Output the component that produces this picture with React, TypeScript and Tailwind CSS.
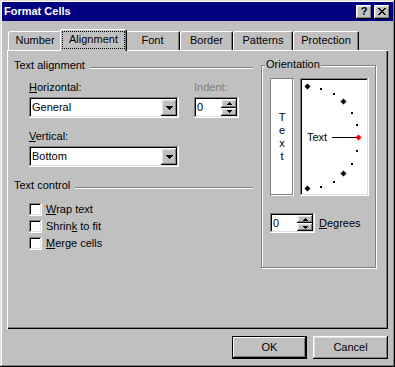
import React from "react";

const raised =
  "shadow-[inset_-1px_-1px_#000,inset_1px_1px_#fff,inset_-2px_-2px_#808080,inset_2px_2px_#dfdfdf]";
const sunken =
  "shadow-[inset_-1px_-1px_#fff,inset_1px_1px_#808080,inset_-2px_-2px_#dfdfdf,inset_2px_2px_#000]";

function DownArrow() {
  return (
    <svg width="7" height="4" shapeRendering="crispEdges">
      <rect x="0" y="0" width="7" height="1" fill="#000" />
      <rect x="1" y="1" width="5" height="1" fill="#000" />
      <rect x="2" y="2" width="3" height="1" fill="#000" />
      <rect x="3" y="3" width="1" height="1" fill="#000" />
    </svg>
  );
}

function SmallArrow({ up }: { up: boolean }) {
  return (
    <svg width="5" height="3" shapeRendering="crispEdges">
      {up ? (
        <>
          <rect x="2" y="0" width="1" height="1" fill="#000" />
          <rect x="1" y="1" width="3" height="1" fill="#000" />
          <rect x="0" y="2" width="5" height="1" fill="#000" />
        </>
      ) : (
        <>
          <rect x="0" y="0" width="5" height="1" fill="#000" />
          <rect x="1" y="1" width="3" height="1" fill="#000" />
          <rect x="2" y="2" width="1" height="1" fill="#000" />
        </>
      )}
    </svg>
  );
}

function CloseGlyph() {
  const rows = ["##....##", ".##..##.", "..####..", "...##...", "..####..", ".##..##.", "##....##"];
  return (
    <svg width="8" height="7" shapeRendering="crispEdges">
      {rows.flatMap((r, y) =>
        r.split("").map((c, x) =>
          c === "#" ? <rect key={`${x}-${y}`} x={x} y={y} width="1" height="1" fill="#000" /> : null
        )
      )}
    </svg>
  );
}

function Select({ value }: { value: string }) {
  return (
    <div className={`flex h-[21px] w-[150px] bg-white p-[2px] ${sunken}`}>
      <div className="flex-1 pl-[1px] leading-[17px]">{value}</div>
      <div className={`flex h-[17px] w-[16px] items-center justify-center bg-[#c0c0c0] ${raised}`}>
        <DownArrow />
      </div>
    </div>
  );
}

function Spinner({ h }: { h: string }) {
  return (
    <div className={`flex w-[45px] bg-white p-[2px] ${h} ${sunken}`}>
      <div className="flex-1 pl-[1px] leading-[16px]">0</div>
      <div className="flex w-[16px] flex-col">
        <div className={`flex flex-1 items-center justify-center bg-[#c0c0c0] ${raised}`}>
          <SmallArrow up />
        </div>
        <div className={`flex flex-1 items-center justify-center bg-[#c0c0c0] ${raised}`}>
          <SmallArrow up={false} />
        </div>
      </div>
    </div>
  );
}

function Heading({ children }: { children: React.ReactNode }) {
  return (
    <div className="flex h-[13px]">
      <span className="whitespace-nowrap">{children}</span>
      <div className="ml-[5px] mt-[8px] h-[2px] flex-1 border-t border-b border-t-[#808080] border-b-white" />
    </div>
  );
}

function Check({ children }: { children: React.ReactNode }) {
  return (
    <div className="flex h-[13px] items-center gap-[4px]">
      <div className={`h-[13px] w-[13px] bg-white ${sunken}`} />
      <span className="whitespace-nowrap">{children}</span>
    </div>
  );
}

function Dial() {
  const cx = 7;
  const cy = 59;
  const r = 51;
  const items: React.ReactNode[] = [];
  for (let a = 90; a >= -90; a -= 15) {
    const rad = (a * Math.PI) / 180;
    const x = Math.round(cx + r * Math.cos(rad));
    const y = Math.round(cy - r * Math.sin(rad));
    if (a % 45 === 0) {
      const fill = a === 0 ? "#ff0000" : "#000";
      items.push(
        <polygon
          key={a}
          points={`${x + 0.5},${y - 2.5} ${x + 3.5},${y + 0.5} ${x + 0.5},${y + 3.5} ${x - 2.5},${y + 0.5}`}
          fill={fill}
        />
      );
    } else {
      items.push(<rect key={a} x={x} y={y} width="2" height="2" fill="#000" />);
    }
  }
  return (
    <svg width="69" height="118" className="block">
      {items}
      <line x1="32" y1="59.5" x2="56" y2="59.5" stroke="#000" strokeWidth="1" />
      <text x="7" y="63" fontSize="11" fontFamily="Liberation Sans, Arial, sans-serif" fill="#000">
        Text
      </text>
    </svg>
  );
}

export default function App() {
  return (
    <div
      className={`h-[367px] w-[395px] overflow-hidden bg-[#c0c0c0] p-[2px] font-['Liberation_Sans','Arial',sans-serif] text-[11px] leading-[13px] text-black shadow-[inset_-1px_-1px_#000,inset_1px_1px_#dfdfdf,inset_-2px_-2px_#808080,inset_2px_2px_#fff]`}
    >
      {/* Title bar */}
      <div className="flex h-[19px] items-center bg-[#000080] pl-[2px] pr-[3px]">
        <span className="font-bold text-white">Format Cells</span>
        <div className="ml-auto flex gap-[2px]">
          <div className={`flex h-[14px] w-[16px] items-center justify-center bg-[#c0c0c0] text-[11px] font-bold leading-[11px] ${raised}`}>
            ?
          </div>
          <div className={`flex h-[14px] w-[16px] items-center justify-center bg-[#c0c0c0] ${raised}`}>
            <CloseGlyph />
          </div>
        </div>
      </div>

      <div className="pl-[5px] pt-[8px]">
        {/* Tabs */}
        <div className="ml-[1px] flex h-[21px] items-end">
          <div className="flex h-[19px] w-[54px] justify-center rounded-t-[2px] pt-[3px] shadow-[inset_1px_1px_#fff,inset_-1px_0_#000,inset_-2px_0_#808080]">
            Number
          </div>
          <div className="relative z-10 -mx-[2px] -mb-[1px] flex h-[22px] w-[67px] justify-center rounded-t-[2px] bg-[#c0c0c0] pt-[2px] shadow-[inset_1px_1px_#fff,inset_-1px_0_#000,inset_-2px_0_#808080]">
            <span className="h-[18px] border border-dotted border-black px-[6px] pb-[2px] pt-[1px]">Alignment</span>
          </div>
          <div className="flex h-[19px] w-[55px] justify-center rounded-t-[2px] pt-[3px] shadow-[inset_1px_1px_#fff,inset_-1px_0_#000,inset_-2px_0_#808080]">
            Font
          </div>
          <div className="flex h-[19px] w-[53px] justify-center rounded-t-[2px] pt-[3px] shadow-[inset_1px_1px_#fff,inset_-1px_0_#000,inset_-2px_0_#808080]">
            Border
          </div>
          <div className="flex h-[19px] w-[60px] justify-center rounded-t-[2px] pt-[3px] shadow-[inset_1px_1px_#fff,inset_-1px_0_#000,inset_-2px_0_#808080]">
            Patterns
          </div>
          <div className="flex h-[19px] w-[66px] justify-center rounded-t-[2px] pt-[3px] shadow-[inset_1px_1px_#fff,inset_-1px_0_#000,inset_-2px_0_#808080]">
            Protection
          </div>
        </div>

        {/* Panel */}
        <div className="relative flex h-[279px] w-[381px] pl-[7px] pt-[9px] shadow-[inset_1px_1px_#fff,inset_-1px_-1px_#000,inset_-2px_-2px_#808080]">
          {/* Left column */}
          <div className="flex w-[239px] flex-col">
            <Heading>Text alignment</Heading>
            <div className="mt-[9px] flex pl-[15px]">
              <span className="w-[165px]">
                <span className="underline">H</span>orizontal:
              </span>
              <span className="text-[#808080]">Indent:</span>
            </div>
            <div className="mt-[3px] flex pl-[15px]">
              <Select value="General" />
              <div className="ml-[15px]">
                <Spinner h="h-[21px]" />
              </div>
            </div>
            <div className="mt-[12px] pl-[15px]">
              <span className="underline">V</span>ertical:
            </div>
            <div className="mt-[3px] pl-[15px]">
              <Select value="Bottom" />
            </div>
            <div className="mt-[12px]">
              <Heading>Text control</Heading>
            </div>
            <div className="mt-[11px] flex flex-col gap-[4px] pl-[15px]">
              <Check>
                <span className="underline">W</span>rap text
              </Check>
              <Check>
                Shrin<span className="underline">k</span> to fit
              </Check>
              <Check>
                <span className="underline">M</span>erge cells
              </Check>
            </div>
          </div>

          {/* Right column: Orientation */}
          <div className="ml-[8px] mt-[6px]">
            <div className="relative h-[203px] w-[115px] border border-[#808080] pl-[8px] pt-[12px] shadow-[1px_1px_0_#fff,inset_1px_1px_0_#fff]">
              <span className="absolute left-[3px] top-[-8px] bg-[#c0c0c0] px-[1px]">Orientation</span>
              <div className="flex gap-[6px]">
                <div className="flex h-[118px] w-[24px] flex-col items-center justify-center bg-white shadow-[inset_1px_1px_#808080,inset_-1px_-1px_#fff,inset_-2px_-2px_#808080]">
                  <span>T</span>
                  <span>e</span>
                  <span>x</span>
                  <span>t</span>
                </div>
                <div className={`h-[118px] w-[69px] bg-white ${sunken}`}>
                  <Dial />
                </div>
              </div>
              <div className="mt-[17px] flex items-center">
                <Spinner h="h-[20px]" />
                <span className="ml-[4px]">
                  <span className="underline">D</span>egrees
                </span>
              </div>
            </div>
          </div>
        </div>

        {/* Buttons */}
        <div className="mt-[7px] flex justify-end gap-[6px] pr-[5px]">
          <div className="flex h-[23px] w-[75px] items-center justify-center border border-black shadow-[inset_-1px_-1px_#000,inset_1px_1px_#fff,inset_-2px_-2px_#808080]">
            OK
          </div>
          <div className={`flex h-[23px] w-[75px] items-center justify-center ${raised}`}>Cancel</div>
        </div>
      </div>
    </div>
  );
}
